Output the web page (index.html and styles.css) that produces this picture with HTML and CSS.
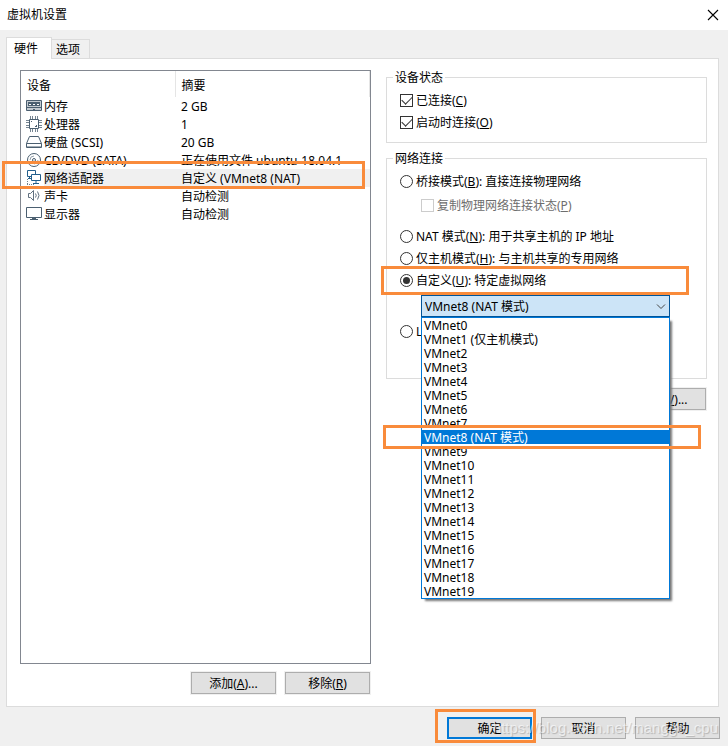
FILE: index.html
```html
<!DOCTYPE html>
<html lang="zh-CN">
<head>
<meta charset="utf-8">
<title>虚拟机设置</title>
<link rel="stylesheet" href="styles.css">
</head>
<body>
<header class="titlebar">
  <h1>虚拟机设置</h1>
  <button class="close" type="button" aria-label="关闭"><svg width="12" height="12" viewBox="0 0 12 12"><path d="M1 1l10 10M11 1L1 11" fill="none" stroke="#000" stroke-width="1.1"/></svg></button>
</header>
<main class="dialog">
  <div class="tabs" role="tablist">
    <button class="tab active" type="button" role="tab" aria-selected="true">硬件</button>
    <button class="tab" type="button" role="tab" aria-selected="false">选项</button>
  </div>
  <div class="panel">
    <section class="devices">
      <div class="list">
        <table>
          <colgroup><col class="col-name"><col></colgroup>
          <thead><tr><th>设备</th><th>摘要</th></tr></thead>
          <tbody>
            <tr>
              <td><div class="device"><svg width="16" height="16" viewBox="0 0 16 16"><path d="M.5 2.500h15v10H.5z" fill="#c3cad0" stroke="#4b5f70"/><path d="M2 4h12v4H2z" fill="#4b5f70"/><path d="M3 6h2v1H3zM7 6h2v1H7zM11 6h2v1h-2z" fill="#fff"/><path d="M1 9.500h14" stroke="#4b5f70"/><path d="M6 12h1v-1h2v1h1v1H6z" fill="#4b5f70"/></svg><span>内存</span></div></td>
              <td>2 GB</td>
            </tr>
            <tr>
              <td><div class="device"><svg width="16" height="16" viewBox="0 0 16 16"><path d="M3.500 3.500h9v9h-9z" fill="#fff" stroke="#4b5f70"/><path d="M4.500 0v3M6.500 0v3M9.500 0v3M11.500 0v3M4.500 13v3M6.500 13v3M9.500 13v3M11.500 13v3M0 4.500h3M0 6.500h3M0 9.500h3M0 11.500h3M13 4.500h3M13 6.500h3M13 9.500h3M13 11.500h3" stroke="#768592"/><path d="M5 5h1v1H5zM10 9h1v2H9v-1h1z" fill="#4b5f70"/></svg><span>处理器</span></div></td>
              <td>1</td>
            </tr>
            <tr>
              <td><div class="device"><svg width="16" height="16" viewBox="0 0 16 16"><path d="M3.500 2.500h9l3 7v4H.5v-4zM.5 9.500h15" fill="none" stroke="#4b5f70" stroke-linejoin="round"/><path d="M1 12.500h14" stroke="#a5afb7"/></svg><span>硬盘 (SCSI)</span></div></td>
              <td>20 GB</td>
            </tr>
            <tr>
              <td><div class="device"><svg width="16" height="16" viewBox="0 0 16 16"><g fill="none" stroke="#4b5f70"><circle cx="8" cy="8" r="6.500"/><circle cx="8" cy="8" r="1.500"/><path d="M4 8a4 4 0 0 1 4-4M12 8a4 4 0 0 1-4 4" stroke="#94a0aa"/></g></svg><span>CD/DVD (SATA)</span></div></td>
              <td>正在使用文件 ubuntu-18.04.1-</td>
            </tr>
            <tr class="selected">
              <td><div class="device"><svg width="16" height="16" viewBox="0 0 16 16"><path d="M1.500.5h8v6h-8z" fill="#fff" stroke="#235f8c"/><path d="M5.500 4.500h9v6h-9z" fill="#fff" stroke="#235f8c"/><path d="M10 11v2M7 13.500h6M3.500 7v2M2 8.500h3" stroke="#235f8c" fill="none"/><path d="M1.500 9v5M1 14.500h8" fill="none" stroke="#70808c" stroke-dasharray="1 1"/></svg><span>网络适配器</span></div></td>
              <td>自定义 (VMnet8 (NAT)</td>
            </tr>
            <tr>
              <td><div class="device"><svg width="16" height="16" viewBox="0 0 16 16"><g fill="none" stroke="#607080"><path d="M2.500 5.500h2l3-3v10l-3-3h-2z"/><path d="M9.500 5.500q1.500 2 0 4M11.500 3.500q3 4 0 8"/></g></svg><span>声卡</span></div></td>
              <td>自动检测</td>
            </tr>
            <tr>
              <td><div class="device"><svg width="16" height="16" viewBox="0 0 16 16"><path d="M.5 1.500h15v10H.5z" fill="#fff" stroke="#4b5f70"/><path d="M6 12h4v1H6zM4 13h8v1H4z" fill="#4b5f70"/></svg><span>显示器</span></div></td>
              <td>自动检测</td>
            </tr>
          </tbody>
        </table>
        <div class="mark mark-device"></div>
      </div>
      <div class="actions">
        <button class="btn" type="button">添加(<u>A</u>)...</button>
        <button class="btn" type="button">移除(<u>R</u>)</button>
      </div>
    </section>
    <section class="settings">
      <fieldset class="status">
        <legend>设备状态</legend>
        <label class="row"><input type="checkbox" checked><span>已连接(<u>C</u>)</span></label>
        <label class="row"><input type="checkbox" checked><span>启动时连接(<u>O</u>)</span></label>
      </fieldset>
      <fieldset class="network">
        <legend>网络连接</legend>
        <label class="row"><input type="radio" name="net"><span>桥接模式(<u>B</u>): 直接连接物理网络</span></label>
        <label class="row sub"><input type="checkbox" disabled><span>复制物理网络连接状态(<u>P</u>)</span></label>
        <label class="row"><input type="radio" name="net"><span>NAT 模式(<u>N</u>): 用于共享主机的 IP 地址</span></label>
        <label class="row"><input type="radio" name="net"><span>仅主机模式(<u>H</u>): 与主机共享的专用网络</span></label>
        <div class="marked">
          <label class="row"><input type="radio" name="net" checked><span>自定义(<u>U</u>): 特定虚拟网络</span></label>
          <div class="mark mark-radio"></div>
        </div>
        <div class="combo">
          <select aria-label="特定虚拟网络"><option>VMnet8 (NAT 模式)</option></select>
          <svg class="arrow" width="10" height="6" viewBox="0 0 10 6"><path d="M1 .5l4 4 4-4" fill="none" stroke="#444"/></svg>
          <ul class="options" role="listbox" aria-label="虚拟网络">
            <li role="option">VMnet0</li>
            <li role="option">VMnet1 (仅主机模式)</li>
            <li role="option">VMnet2</li>
            <li role="option">VMnet3</li>
            <li role="option">VMnet4</li>
            <li role="option">VMnet5</li>
            <li role="option">VMnet6</li>
            <li role="option">VMnet7</li>
            <li role="option" class="current" aria-selected="true">VMnet8 (NAT 模式)<div class="mark mark-option"></div></li>
            <li role="option">VMnet9</li>
            <li role="option">VMnet10</li>
            <li role="option">VMnet11</li>
            <li role="option">VMnet12</li>
            <li role="option">VMnet13</li>
            <li role="option">VMnet14</li>
            <li role="option">VMnet15</li>
            <li role="option">VMnet16</li>
            <li role="option">VMnet17</li>
            <li role="option">VMnet18</li>
            <li role="option">VMnet19</li>
          </ul>
        </div>
        <label class="row segment"><input type="radio" name="net"><span>L</span></label>
      </fieldset>
      <button class="btn advanced" type="button">高级(<u>V</u>)...</button>
    </section>
  </div>
</main>
<footer class="footer">
  <div class="marked">
    <button class="btn primary" type="button">确定</button>
    <div class="mark mark-ok"></div>
  </div>
  <button class="btn" type="button">取消</button>
  <button class="btn" type="button">帮助</button>
  <span class="watermark">https://blog.csdn.net/mangge_cpu</span>
</footer>
</body>
</html>
```
FILE: styles.css
```css
* { box-sizing: border-box; }

body {
  margin: 0;
  min-height: 100vh;
  display: flex;
  flex-direction: column;
  background: #f0f0f0;
  color: #000;
  font: 12px/16px "Noto Sans", "Noto Sans CJK SC", sans-serif;
}

button, select, input { font: inherit; color: inherit; margin: 0; }

.titlebar {
  display: flex;
  align-items: center;
  justify-content: space-between;
  height: 30px;
  padding: 0 9px 0 7px;
  background: #fff;
}
.titlebar h1 { margin: 0; font-size: 12px; font-weight: 400; }
.close { display: flex; padding: 0; border: 0; background: none; }

.dialog {
  flex: 1;
  display: flex;
  flex-direction: column;
  padding: 7px 9px 0 6px;
}
.tabs { display: flex; align-items: flex-end; height: 21px; }
.tab {
  width: 38px;
  height: 19px;
  padding: 2px 0 0 4px;
  border: 1px solid #dcdcdc;
  border-width: 1px 1px 0 0;
  background: #f0f0f0;
  line-height: 16px;
  text-align: left;
}
.tab.active {
  position: relative;
  z-index: 1;
  width: 46px;
  height: 22px;
  margin-bottom: -1px;
  padding: 0 0 0 7px;
  border-left-width: 1px;
  background: #fff;
}
.panel {
  flex: 1;
  display: grid;
  grid-template-columns: 351fr 321fr;
  gap: 15px;
  padding: 10px 11px 12px 13px;
  border: 1px solid #dcdcdc;
  background: #fff;
}

.devices { display: flex; flex-direction: column; gap: 8px; padding-top: 1px; }
.list { position: relative; flex: 1; border: 1px solid #828790; }
table { width: 100%; border-collapse: collapse; table-layout: fixed; }
.col-name { width: 154px; }
th {
  height: 26px;
  padding: 3px 0 0 6px;
  border-right: 1px solid #e5e5e5;
  text-align: left;
  font-weight: 400;
}
td { height: 18px; padding: 2px 0 0 6px; white-space: nowrap; }
td:first-child { padding: 0 0 0 5px; }
.device { display: flex; align-items: center; gap: 2px; height: 18px; }
.device svg { flex: none; }
.device span { flex: 1; height: 18px; line-height: 20px; }
.selected .device span, .selected td + td { background: #f0f0f0; }
.actions { display: flex; justify-content: flex-end; gap: 9px; padding-right: 1px; }

.btn {
  display: block;
  width: 85px;
  height: 22px;
  padding: 2px 0 0;
  border: 1px solid #adadad;
  background: #e1e1e1;
  box-shadow: 0 0 0 1px #f0f0f0;
}
.primary { border: 2px solid #0078d7; }

fieldset { min-width: 0; margin: 0; padding: 4px 13px 9px; border: 1px solid #dcdcdc; }
legend { margin-left: -7px; padding: 2px 2px 0; line-height: 14px; }
.network { margin-top: 7px; padding-bottom: 36px; }
.row { display: flex; align-items: center; gap: 3px; height: 22px; }
.row span { padding-top: 2px; }
.sub { margin: 2px 0 9px 21px; color: #6d6d6d; }
.segment { margin-top: 3px; }

input {
  appearance: none;
  display: grid;
  place-items: center;
  flex: none;
  width: 13px;
  height: 13px;
  border: 1px solid #333;
  background: #fff;
}
input[type="radio"] { border-radius: 50%; }
input[type="radio"]:checked::before {
  content: "";
  width: 7px;
  height: 7px;
  border-radius: 50%;
  background: #333;
}
input[type="checkbox"]:checked::before {
  content: "";
  width: 9px;
  height: 5px;
  border: solid #333;
  border-width: 0 0 1px 1px;
  transform: translateY(-1px) rotate(-45deg);
}
input:disabled { border-color: #ccc; }

.combo { position: relative; margin: 4px 23px 0 21px; }
select {
  appearance: none;
  display: block;
  width: 100%;
  height: 22px;
  padding: 2px 3px 0;
  border: 1px solid #005499;
  border-radius: 0;
  background: #cce4f7;
}
.arrow { position: absolute; top: 9px; right: 4px; pointer-events: none; }
.options {
  position: absolute;
  z-index: 1;
  top: 100%;
  left: 0;
  right: 0;
  margin: 0;
  padding: 0;
  list-style: none;
  border: 1px solid #0078d7;
  background: #fff;
  box-shadow: 3px 3px 2px -1px #777;
}
.options li { height: 14px; padding-left: 2px; line-height: 16px; }
.options .current { position: relative; background: #0078d7; color: #fff; }
.advanced { margin: 9px 1px 0 auto; }

.footer {
  position: relative;
  display: flex;
  justify-content: flex-end;
  gap: 9px;
  padding: 10px 8px 7px;
}
.marked { position: relative; }
.mark { position: absolute; z-index: 2; border: 3px solid #f98b3b; pointer-events: none; }
.mark-device { inset: 90px 5px auto -19px; height: 28px; }
.mark-radio { inset: -3px 4px -4px -19px; }
.mark-option { inset: -5px -32px -5px -39px; }
.mark-ok { inset: -8px -4px -4px -12px; }
.watermark {
  position: absolute;
  right: 10px;
  bottom: 9px;
  color: rgba(255, 255, 255, .6);
  font: 15px/18px "Liberation Sans", sans-serif;
  text-shadow: 1px 1px 1px rgba(0, 0, 0, .2);
  pointer-events: none;
}
```
